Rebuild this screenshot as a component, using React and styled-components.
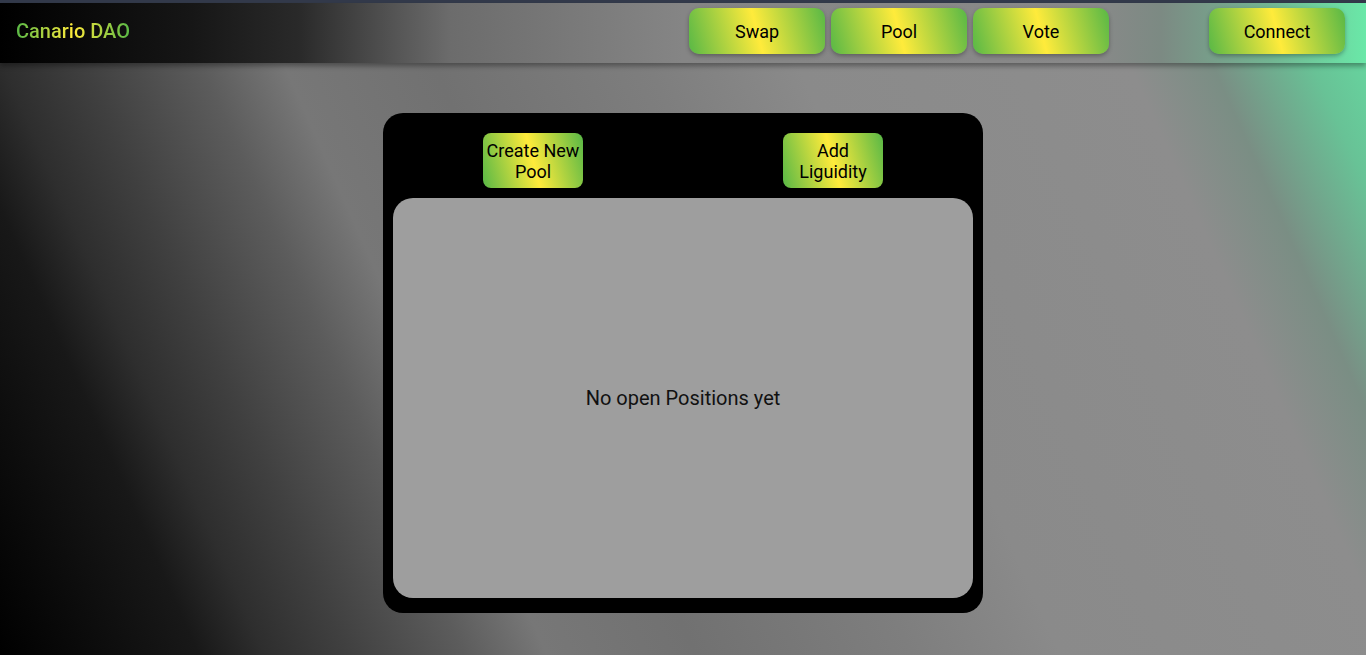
import React from "react";
import styled, { createGlobalStyle } from "styled-components";

const GlobalStyle = createGlobalStyle`
  html, body {
    margin: 0;
    padding: 0;
    height: 100%;
  }
  body {
    font-family: Roboto, "Liberation Sans", Arial, sans-serif;
    background: linear-gradient(
      66deg,
      #000 0%,
      #181818 12%,
      #2e2e2e 16%,
      #404040 21%,
      #5c5c5c 28%,
      #777 33%,
      #717171 42%,
      #7e7e7e 55%,
      #8a8a8a 64%,
      #8d8d8d 84%,
      #7a8e84 89%,
      #68c296 95%,
      #66dca2 100%
    );
    background-attachment: fixed;
    min-height: 100vh;
  }
`;

const greenYellow = (angle) =>
  `linear-gradient(${angle}deg, #58b846 0%, #ffeb3b 50%, #58b846 100%)`;

const Page = styled.div`
  min-height: 100vh;
  display: flex;
  flex-direction: column;
`;

const TopStrip = styled.div`
  height: 3px;
  background: #333a4b;
`;

const Header = styled.header`
  height: 60px;
  box-sizing: border-box;
  display: flex;
  align-items: center;
  padding: 0 21px 4px 16px;
  background: linear-gradient(
    90deg,
    #000 0%,
    #161616 14%,
    #2a2a2a 22%,
    #555 29%,
    #6c6c6c 33%,
    #858585 50%,
    #898989 80%,
    #7c8a83 85%,
    #72b592 93%,
    #6ae8a8 100%
  );
  box-shadow: 0 3px 5px rgba(0, 0, 0, 0.35);
  position: relative;
  z-index: 1;
`;

const Logo = styled.div`
  font-size: 20px;
  font-weight: 500;
  background: ${greenYellow(90)};
  -webkit-background-clip: text;
  background-clip: text;
  color: transparent;
`;

const Nav = styled.nav`
  display: flex;
  gap: 6px;
  margin-left: auto;
  margin-right: 100px;
`;

const NavButton = styled.button`
  width: 136px;
  height: 46px;
  border: none;
  border-radius: 10px;
  background: ${greenYellow(75)};
  box-shadow: 0 2px 4px rgba(0, 0, 0, 0.3);
  font-family: Roboto, "Liberation Sans", Arial, sans-serif;
  font-size: 18px;
  color: #000;
  cursor: pointer;
  padding: 0;
`;

const Main = styled.main`
  display: flex;
  justify-content: center;
  padding-top: 50px;
`;

const Card = styled.section`
  width: 600px;
  height: 500px;
  box-sizing: border-box;
  background: #000;
  border-radius: 20px;
  padding: 20px 0 15px;
  display: flex;
  flex-direction: column;
  gap: 10px;
`;

const ActionRow = styled.div`
  display: flex;
  justify-content: space-around;
`;

const ActionButton = styled.button`
  width: 100px;
  height: 55px;
  border: none;
  border-radius: 8px;
  background: ${greenYellow(75)};
  font-family: Roboto, "Liberation Sans", Arial, sans-serif;
  font-size: 18px;
  line-height: 21px;
  color: #000;
  padding: 0 2px;
  cursor: pointer;
`;

const Positions = styled.div`
  flex: 1;
  margin: 0 10px;
  background: #9e9e9e;
  border-radius: 20px;
  display: flex;
  align-items: center;
  justify-content: center;
  font-size: 20px;
  color: #111;
`;

export default function App() {
  return (
    <>
      <GlobalStyle />
      <Page>
        <TopStrip />
        <Header>
          <Logo>Canario DAO</Logo>
          <Nav>
            <NavButton>Swap</NavButton>
            <NavButton>Pool</NavButton>
            <NavButton>Vote</NavButton>
          </Nav>
          <NavButton>Connect</NavButton>
        </Header>
        <Main>
          <Card>
            <ActionRow>
              <ActionButton>Create New Pool</ActionButton>
              <ActionButton>Add Liguidity</ActionButton>
            </ActionRow>
            <Positions>No open Positions yet</Positions>
          </Card>
        </Main>
      </Page>
    </>
  );
}
